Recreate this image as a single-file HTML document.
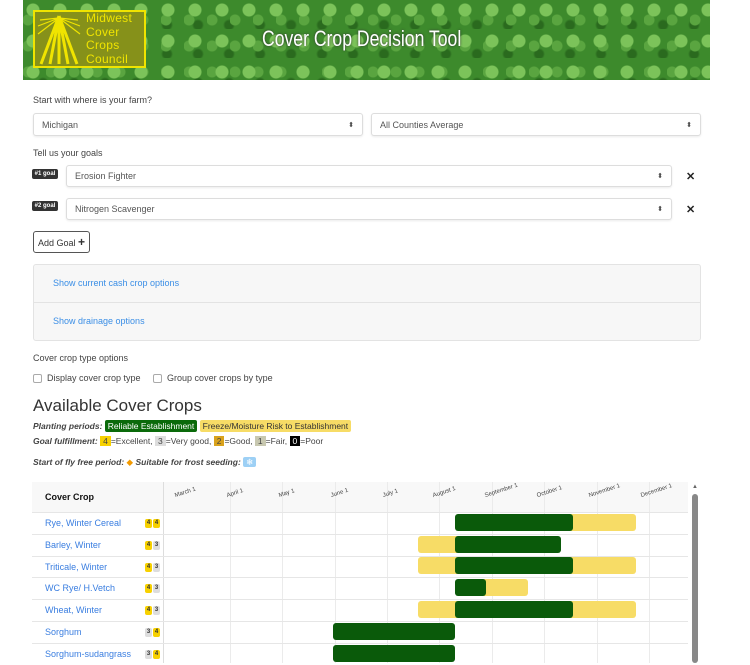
<!DOCTYPE html><html><head><style>
*{box-sizing:border-box;margin:0;padding:0}
body{width:750px;height:663px;overflow:hidden;background:#fff;font-family:"Liberation Sans Narrow","Liberation Sans",sans-serif;color:#333;position:relative}
.a{position:absolute}
.t{font-size:9px;color:#444;white-space:nowrap}
.sel{position:absolute;border:1px solid #ddd;border-radius:3px;background:#fff;font-size:9px;color:#555;padding-left:8px;display:flex;align-items:center;box-shadow:0 1px 2px rgba(0,0,0,.08)}
.sel:after{content:"⬍";position:absolute;right:8px;font-size:7px;color:#444}
.badge{position:absolute;background:#333;color:#fff;font-size:6px;border-radius:2px;width:26px;height:10px;text-align:center;line-height:10px;font-weight:bold}
.x{position:absolute;font-size:11px;font-weight:bold;color:#222}
.lnk{color:#3a8ee6;font-size:9px}
.cb{display:inline-block;width:9px;height:9px;border:1px solid #aaa;border-radius:2px;vertical-align:middle;margin-right:5px}
.row{position:absolute;left:32px;width:656px;height:21.7px;border-top:1px solid #e6e6e6}
.nm{position:absolute;left:13px;top:5px;font-size:9px;color:#3a7ee0}
.g{position:absolute;top:6px;width:7px;height:9px;font-size:6px;font-weight:bold;text-align:center;line-height:9px;border-radius:2px}
.y4{background:#f7d100;color:#333}.g3{background:#ddd;color:#333}
.bar{position:absolute;height:17px;border-radius:3px}
.gr{background:#0a5a0a}.yl{background:#f7dc66}
.vl{position:absolute;top:482px;height:181px;width:1px;background:#ebebeb}
.mo{position:absolute;top:493px;font-size:6px;color:#444;transform:rotate(-18deg);transform-origin:left bottom}
.ban{background-color:#3d8a2c;background-image:
radial-gradient(circle at 10px 10px,#7cc35a 0 6px,transparent 7px),
radial-gradient(circle at 5px 20px,#5aa540 0 5px,transparent 6px),
radial-gradient(circle at 20px 25px,#2a6a1e 0 4px,transparent 6px);
background-size:27px 31px,23px 26px,31px 29px}
</style></head><body>
<div class="a ban" style="left:23px;top:0;width:687px;height:80px"></div>
<div class="a" style="left:33px;top:10px;width:113px;height:58px;background:#86911a;border:2px solid #f0e400"></div>
<svg class="a" style="left:36px;top:14px" width="46" height="52"><g stroke="#f0e400" stroke-width="3" fill="none"><path d="M23 2L5 50M23 2L14 50M23 2L23 50M23 2L32 50M23 2L41 50"/></g><g stroke="#f0e400" stroke-width="1.2"><path d="M23 4L2 12M23 4L2 20M23 4L44 12M23 4L44 20M23 4L4 6M23 4L42 6"/></g></svg>
<div class="a" style="left:86px;top:12px;font-family:'Liberation Sans',sans-serif;font-size:12px;line-height:13.5px;color:#f0e400;letter-spacing:.3px">Midwest<br>Cover<br>Crops<br>Council</div>
<div class="a" style="left:262px;top:26px;font-size:22px;color:#fff;transform:scaleX(.8);transform-origin:left;white-space:nowrap;text-shadow:0 0 3px #333">Cover Crop Decision Tool</div>
<div class="a t" style="left:33px;top:95px">Start with where is your farm?</div>
<div class="sel" style="left:33px;top:113px;width:330px;height:23px">Michigan</div>
<div class="sel" style="left:371px;top:113px;width:330px;height:23px">All Counties Average</div>
<div class="a t" style="left:33px;top:148px">Tell us your goals</div>
<div class="badge" style="left:32px;top:169px">#1 goal</div>
<div class="sel" style="left:66px;top:165px;width:606px;height:22px">Erosion Fighter</div>
<div class="x" style="left:686px;top:170px">✕</div>
<div class="badge" style="left:32px;top:201px">#2 goal</div>
<div class="sel" style="left:66px;top:198px;width:606px;height:22px">Nitrogen Scavenger</div>
<div class="x" style="left:686px;top:203px">✕</div>
<div class="a" style="left:33px;top:231px;width:57px;height:22px;border:1px solid #555;border-radius:3px;font-size:9px;line-height:20px;text-align:center;color:#333">Add Goal <b style="font-size:12px">+</b></div>
<div class="a" style="left:33px;top:264px;width:668px;height:77px;background:#f7f7f7;border:1px solid #e3e3e3;border-radius:3px"></div>
<div class="a" style="left:33px;top:302px;width:668px;height:1px;background:#e3e3e3"></div>
<div class="a lnk" style="left:53px;top:278px">Show current cash crop options</div>
<div class="a lnk" style="left:53px;top:316px">Show drainage options</div>
<div class="a t" style="left:33px;top:353px">Cover crop type options</div>
<div class="a t" style="left:33px;top:373px"><span class="cb"></span>Display cover crop type &nbsp;&nbsp;&nbsp;&nbsp;<span class="cb"></span>Group cover crops by type</div>
<div class="a" style="left:33px;top:396px;font-size:17px;color:#333;white-space:nowrap">Available Cover Crops</div>
<div class="a t" style="left:33px;top:421px;font-size:8.5px"><b><i>Planting periods:</i></b> <span style="background:#0a6a0a;color:#fff;padding:1px 3px;border-radius:2px">Reliable Establishment</span> <span style="background:#f7dc66;color:#333;padding:1px 3px;border-radius:2px">Freeze/Moisture Risk to Establishment</span></div>
<div class="a t" style="left:33px;top:436px;font-size:8.5px"><b><i>Goal fulfillment:</i></b> <span style="background:#f7d100;padding:0 3px">4</span>=Excellent, <span style="background:#ddd;padding:0 3px">3</span>=Very good, <span style="background:#d9a21c;padding:0 3px">2</span>=Good, <span style="background:#c8c8b0;padding:0 3px">1</span>=Fair, <span style="background:#000;color:#fff;padding:0 3px">0</span>=Poor</div>
<div class="a t" style="left:33px;top:457px;font-size:8.5px"><b><i>Start of fly free period:</i></b> <span style="color:#f39a00">◆</span> <b><i>Suitable for frost seeding:</i></b> <span style="background:#9dd0f5;color:#fff;padding:0 3px;border-radius:2px">❄</span></div>
<div class="a" style="left:32px;top:482px;width:656px;height:30px;background:#f8f8f8"></div>
<div class="a" style="left:45px;top:492px;font-size:9px;font-weight:bold;color:#111">Cover Crop</div>
<div class="vl" style="left:163px;background:#ddd"></div>
<div class="vl" style="left:230px"></div><div class="vl" style="left:282px"></div><div class="vl" style="left:335px"></div><div class="vl" style="left:387px"></div><div class="vl" style="left:439px"></div><div class="vl" style="left:492px"></div><div class="vl" style="left:544px"></div><div class="vl" style="left:597px"></div><div class="vl" style="left:649px"></div>
<div class="mo" style="left:176px">March 1</div><div class="mo" style="left:228px">April 1</div><div class="mo" style="left:280px">May 1</div><div class="mo" style="left:332px">June 1</div><div class="mo" style="left:384px">July 1</div><div class="mo" style="left:434px">August 1</div><div class="mo" style="left:486px">September 1</div><div class="mo" style="left:538px">October 1</div><div class="mo" style="left:590px">November 1</div><div class="mo" style="left:642px">December 1</div>
<div class="row" style="top:512px"><span class="nm">Rye, Winter Cereal</span><span class="g y4" style="left:113px">4</span><span class="g y4" style="left:121px">4</span></div>
<div class="row" style="top:534px"><span class="nm">Barley, Winter</span><span class="g y4" style="left:113px">4</span><span class="g g3" style="left:121px">3</span></div>
<div class="row" style="top:556px"><span class="nm">Triticale, Winter</span><span class="g y4" style="left:113px">4</span><span class="g g3" style="left:121px">3</span></div>
<div class="row" style="top:577px"><span class="nm">WC Rye/ H.Vetch</span><span class="g y4" style="left:113px">4</span><span class="g g3" style="left:121px">3</span></div>
<div class="row" style="top:599px"><span class="nm">Wheat, Winter</span><span class="g y4" style="left:113px">4</span><span class="g g3" style="left:121px">3</span></div>
<div class="row" style="top:621px"><span class="nm">Sorghum</span><span class="g g3" style="left:113px">3</span><span class="g y4" style="left:121px">4</span></div>
<div class="row" style="top:643px"><span class="nm">Sorghum-sudangrass</span><span class="g g3" style="left:113px">3</span><span class="g y4" style="left:121px">4</span></div>
<div class="bar yl" style="left:565px;top:514px;width:71px"></div><div class="bar gr" style="left:455px;top:514px;width:118px"></div>
<div class="bar yl" style="left:418px;top:536px;width:45px"></div><div class="bar gr" style="left:455px;top:536px;width:106px"></div>
<div class="bar yl" style="left:418px;top:557px;width:218px"></div><div class="bar gr" style="left:455px;top:557px;width:118px"></div>
<div class="bar yl" style="left:480px;top:579px;width:48px"></div><div class="bar gr" style="left:455px;top:579px;width:31px"></div>
<div class="bar yl" style="left:418px;top:601px;width:218px"></div><div class="bar gr" style="left:455px;top:601px;width:118px"></div>
<div class="bar gr" style="left:333px;top:623px;width:122px"></div>
<div class="bar gr" style="left:333px;top:645px;width:122px"></div>
<div class="a" style="left:692px;top:484px;font-size:6px;color:#666">▲</div>
<div class="a" style="left:692px;top:494px;width:6px;height:169px;background:#888;border-radius:3px"></div>
</body></html>
